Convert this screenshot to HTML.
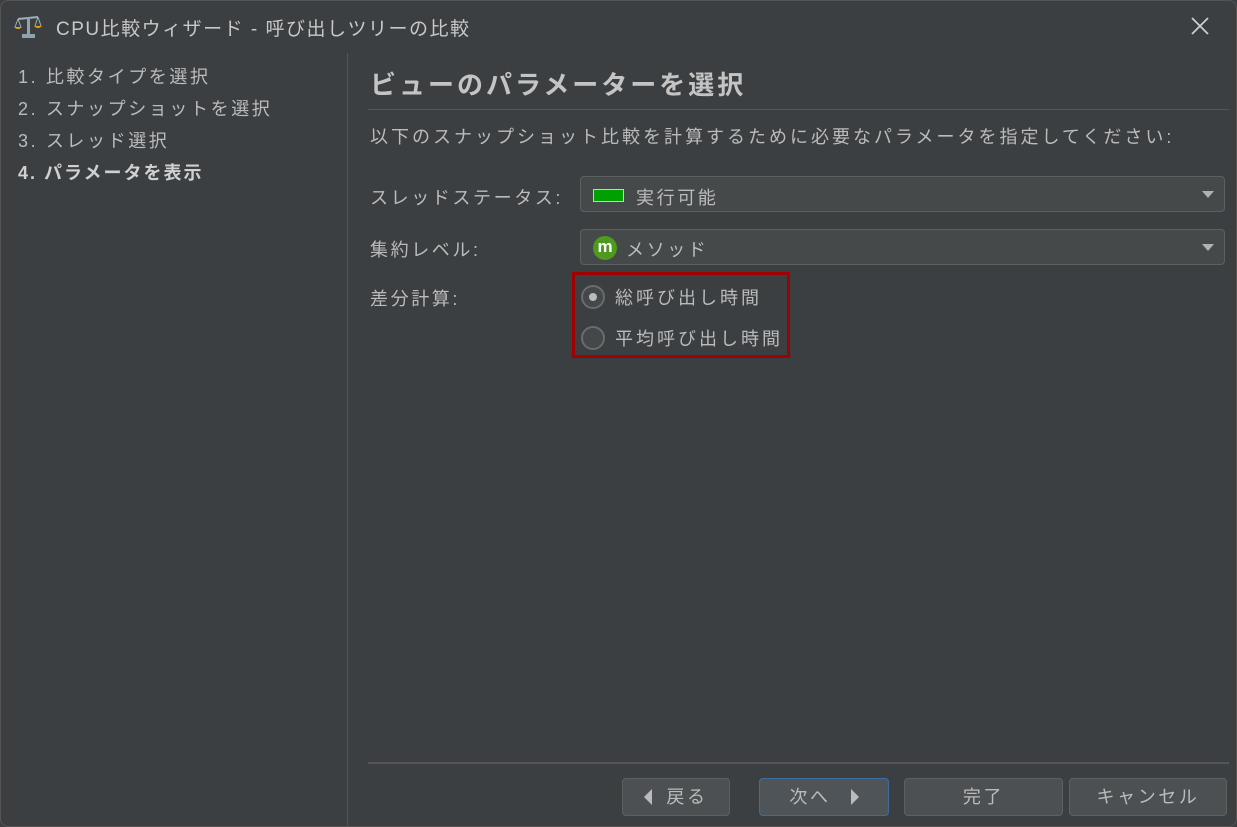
<!DOCTYPE html><html><head><meta charset="utf-8"><style>
body{margin:0;width:1237px;height:827px;background:#3c3f41;font-family:"Liberation Sans","Noto Sans CJK JP",sans-serif;color:#bbbbbb;overflow:hidden;position:relative;font-size:18px;letter-spacing:2.6px}
.a{position:absolute;white-space:nowrap}
.combo{position:absolute;left:580px;width:645px;height:36px;border:1px solid #5e6060;border-radius:4px;background:#45494a;box-sizing:border-box}
.arr{position:absolute;right:10px;top:14px;width:0;height:0;border-left:6px solid transparent;border-right:6px solid transparent;border-top:7px solid #afb1b3}
.btn{position:absolute;top:778px;height:38px;border:1px solid #5e6060;border-radius:4px;background:#4c5052;box-sizing:border-box;text-align:center;line-height:36px;font-size:18px}
.radio{position:absolute;left:581px;width:24px;height:24px;border:2px solid #6b6b6b;border-radius:50%;box-sizing:border-box;background:#43494a}
</style></head><body>
<div style="position:absolute;inset:0;border:1px solid #555;border-radius:8px;pointer-events:none"></div>
<svg class="a" style="left:14px;top:14px" width="28" height="26" viewBox="0 0 28 26"><path d="M4 5 L24 3" stroke="#9fb0b8" stroke-width="2"/><rect x="13" y="3" width="3" height="18" fill="#8fa3ad"/><rect x="8" y="20" width="13" height="4" fill="#8fa3ad"/><path d="M4 5 L1 13 M4 5 L7 13 M24 3 L21 12 M24 3 L27 12" stroke="#9fb0b8"/><path d="M0 13 H8 Q4 17 0 13Z M20 12 H28 Q24 16 20 12Z" fill="#e8a317"/></svg>
<div class="a" style="left:56px;top:14px;font-size:19px;color:#c8c8c8;letter-spacing:1.5px">CPU比較ウィザード - 呼び出しツリーの比較</div>
<svg class="a" style="left:1190px;top:16px" width="20" height="20"><path d="M2 2L18 18M18 2L2 18" stroke="#ccc" stroke-width="1.8"/></svg>
<div class="a" style="left:18px;top:61px;line-height:32px">1. 比較タイプを選択<br>2. スナップショットを選択<br>3. スレッド選択<br><b style="color:#d0d0d0;letter-spacing:2px">4. パラメータを表示</b></div>
<div class="a" style="left:347px;top:53px;width:1px;height:774px;background:#555"></div>
<div class="a" style="left:370px;top:65px;font-size:26px;font-weight:bold;color:#c4c4c4;letter-spacing:3px">ビューのパラメーターを選択</div>
<div class="a" style="left:368px;top:109px;width:861px;height:1px;background:#555"></div>
<div class="a" style="left:370px;top:123px;letter-spacing:3px">以下のスナップショット比較を計算するために必要なパラメータを指定してください:</div>
<div class="a" style="left:370px;top:184px">スレッドステータス:</div>
<div class="combo" style="top:176px"><div class="a" style="left:12px;top:12px;width:29px;height:11px;background:#00a000;border:1px solid #ccc"></div><div class="a" style="left:55px;top:7px">実行可能</div><div class="arr"></div></div>
<div class="a" style="left:370px;top:236px">集約レベル:</div>
<div class="combo" style="top:229px"><div class="a" style="left:12px;top:6px;width:24px;height:24px;border-radius:50%;background:#4e9a1f;color:#fff;font-weight:bold;text-align:center;line-height:22px;font-size:17px;letter-spacing:0">m</div><div class="a" style="left:45px;top:6px">メソッド</div><div class="arr"></div></div>
<div class="a" style="left:370px;top:285px">差分計算:</div>
<div class="a" style="left:572px;top:272px;width:218px;height:86px;border:3px solid #a00000;box-sizing:border-box"></div>
<div class="radio" style="top:285px"><div class="a" style="left:6px;top:6px;width:8px;height:8px;border-radius:50%;background:#bbb"></div></div>
<div class="a" style="left:615px;top:284px;letter-spacing:3px">総呼び出し時間</div>
<div class="radio" style="top:326px"></div>
<div class="a" style="left:615px;top:325px;letter-spacing:3px">平均呼び出し時間</div>
<div class="a" style="left:368px;top:762px;width:861px;height:2px;background:#555"></div>
<div class="btn" style="left:622px;width:108px"><span style="display:inline-block;width:0;height:0;border-top:8px solid transparent;border-bottom:8px solid transparent;border-right:8px solid #bbb;margin-right:14px;vertical-align:-2px"></span>戻る</div>
<div class="btn" style="left:759px;width:130px;border-color:#3d6d9e;background:#4e5457">次へ<span style="display:inline-block;width:0;height:0;border-top:8px solid transparent;border-bottom:8px solid transparent;border-left:8px solid #bbb;margin-left:20px;vertical-align:-2px"></span></div>
<div class="btn" style="left:904px;width:159px">完了</div>
<div class="btn" style="left:1069px;width:158px">キャンセル</div>
</body></html>
